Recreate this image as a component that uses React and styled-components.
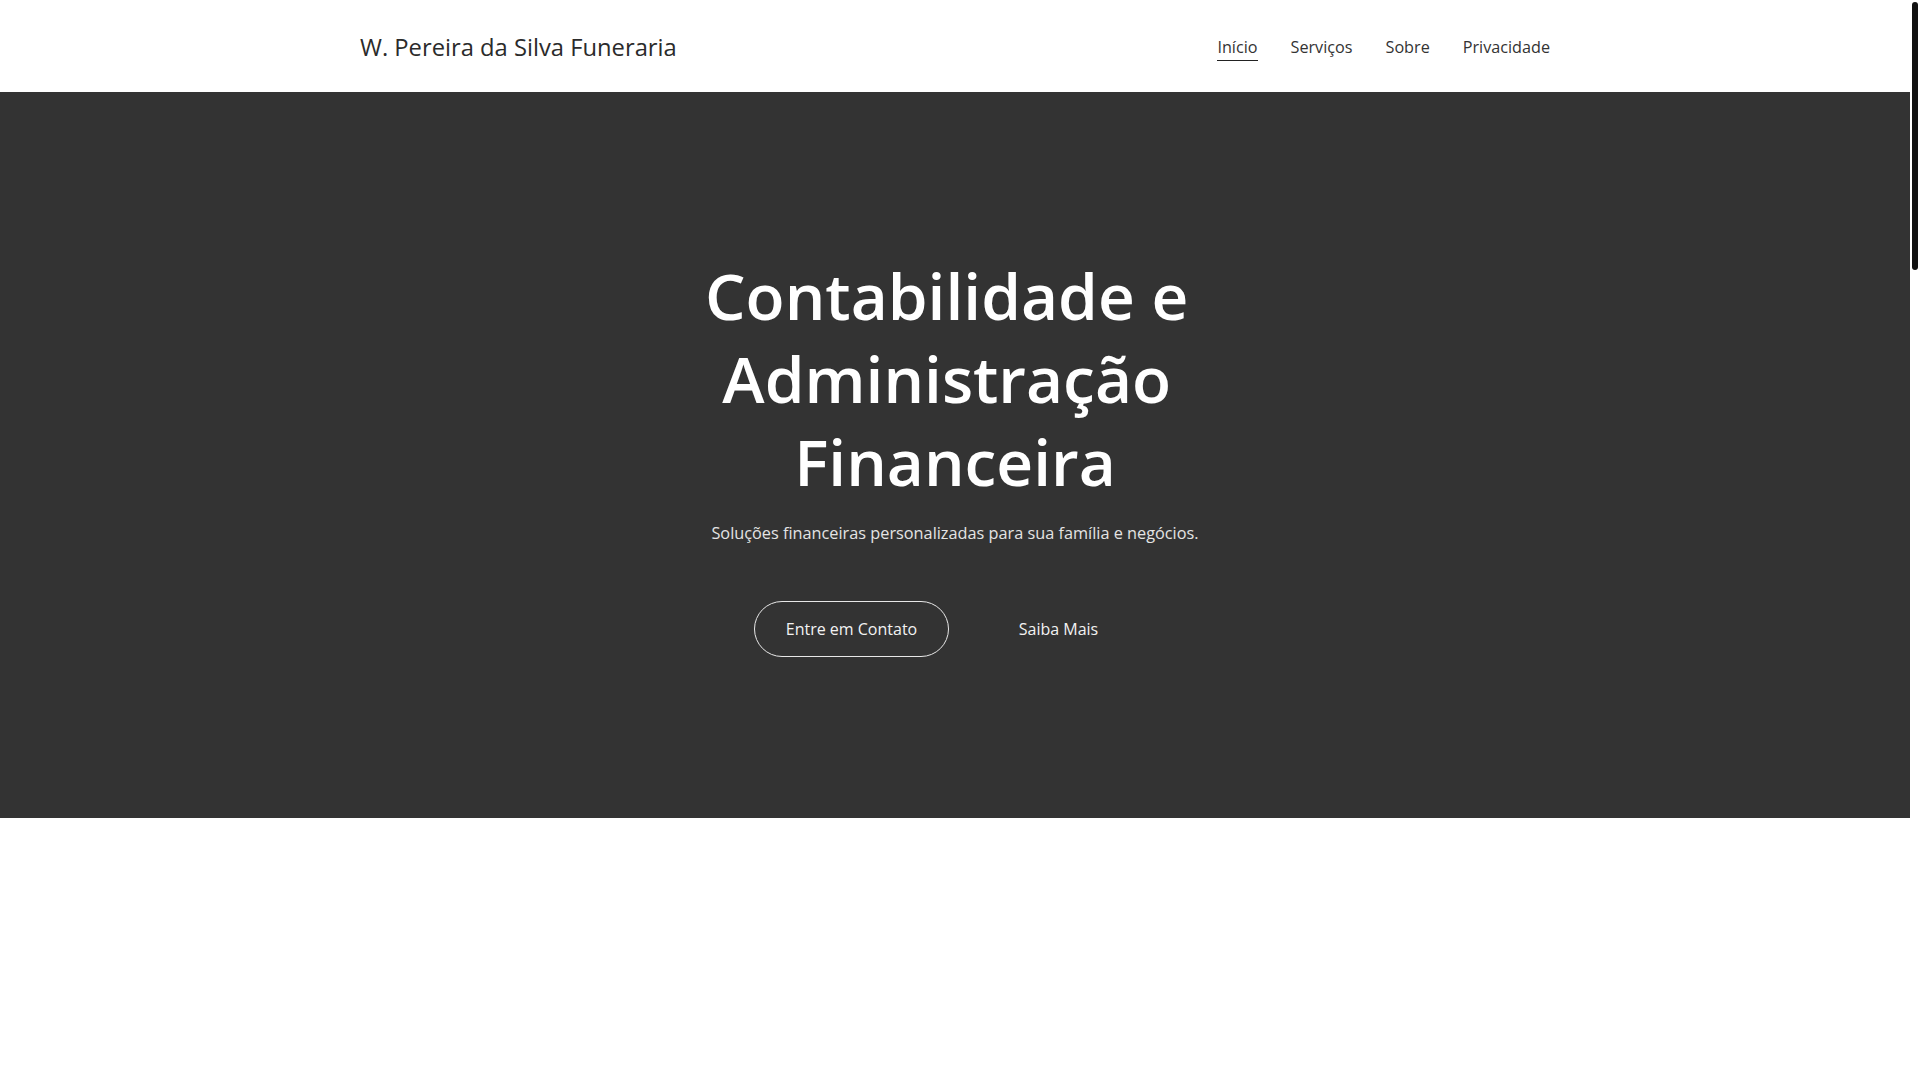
import React from 'react'
import styled, { createGlobalStyle } from 'styled-components'

const GlobalStyle = createGlobalStyle`
  * {
    box-sizing: border-box;
  }
  html, body {
    overflow: hidden;
  }
  body {
    margin: 0;
    background: #ffffff;
    font-family: "Open Sans", "Noto Sans", sans-serif;
    color: #333333;
  }
  a {
    text-decoration: none;
    color: inherit;
  }
`;

const Page = styled.div`
  margin-right: 10px;
`;

// overlay scrollbar thumb seen on the right edge of the window
const ScrollThumb = styled.div`
  position: fixed;
  top: 2px;
  right: 2px;
  width: 6px;
  height: 268px;
  border-radius: 3px;
  background: #111111;
`;

const Header = styled.header`
  background: #ffffff;
  height: 92px;
  display: flex;
  justify-content: center;
`;

const HeaderInner = styled.div`
  width: 100%;
  max-width: 1190px;
  padding-top: 2px;
  display: flex;
  align-items: center;
  justify-content: space-between;
`;

const Brand = styled.a`
  font-size: 23.75px;
  font-weight: 400;
  color: #2b2b2b;
  line-height: normal;
`;

const Nav = styled.nav`
  display: flex;
  align-items: center;
  gap: 33px;
  padding-top: 3px;
`;

const NavLink = styled.a`
  font-size: 16.2px;
  line-height: normal;
  color: #333333;
  padding-bottom: 2px;
  border-bottom: 1px solid ${({ $active }) => ($active ? '#222222' : 'transparent')};
`;

const Hero = styled.section`
  background: #333333;
  min-height: 726px;
  display: flex;
  flex-direction: column;
  align-items: center;
  justify-content: center;
  text-align: center;
  padding: 0 20px;
`;

const HeroTitle = styled.h1`
  margin: 0;
  max-width: 560px;
  font-size: 64px;
  font-weight: 600;
  line-height: 83px;
  color: #ffffff;
  white-space: break-spaces;
`;

const HeroText = styled.p`
  margin: 18px 0 0;
  font-size: 16.3px;
  line-height: 24px;
  color: #e4e4e4;
`;

const Actions = styled.div`
  margin-top: 56px;
  display: flex;
  gap: 12px;
`;

const Button = styled.a`
  width: 195px;
  height: 56px;
  display: flex;
  align-items: center;
  justify-content: center;
  border-radius: 999px;
  font-size: 16px;
  color: #f2f2f2;
  border: 1px solid ${({ $outline }) => ($outline ? '#e8e8e8' : 'transparent')};
`;

const links = ['Início', 'Serviços', 'Sobre', 'Privacidade']

const App = () => {
  return (
    <>
      <GlobalStyle />
      <Page>
        <Header>
          <HeaderInner>
            <Brand href="#">W. Pereira da Silva Funeraria</Brand>
            <Nav>
              {links.map((l, i) => (
                <NavLink key={l} href="#" $active={i === 0}>{l}</NavLink>
              ))}
            </Nav>
          </HeaderInner>
        </Header>
        <Hero>
          <HeroTitle>Contabilidade e Administração Financeira</HeroTitle>
          <HeroText>Soluções financeiras personalizadas para sua família e negócios.</HeroText>
          <Actions>
            <Button href="#" $outline>Entre em Contato</Button>
            <Button href="#">Saiba Mais</Button>
          </Actions>
        </Hero>
      </Page>
      <ScrollThumb />
    </>
  )
}

export default App
